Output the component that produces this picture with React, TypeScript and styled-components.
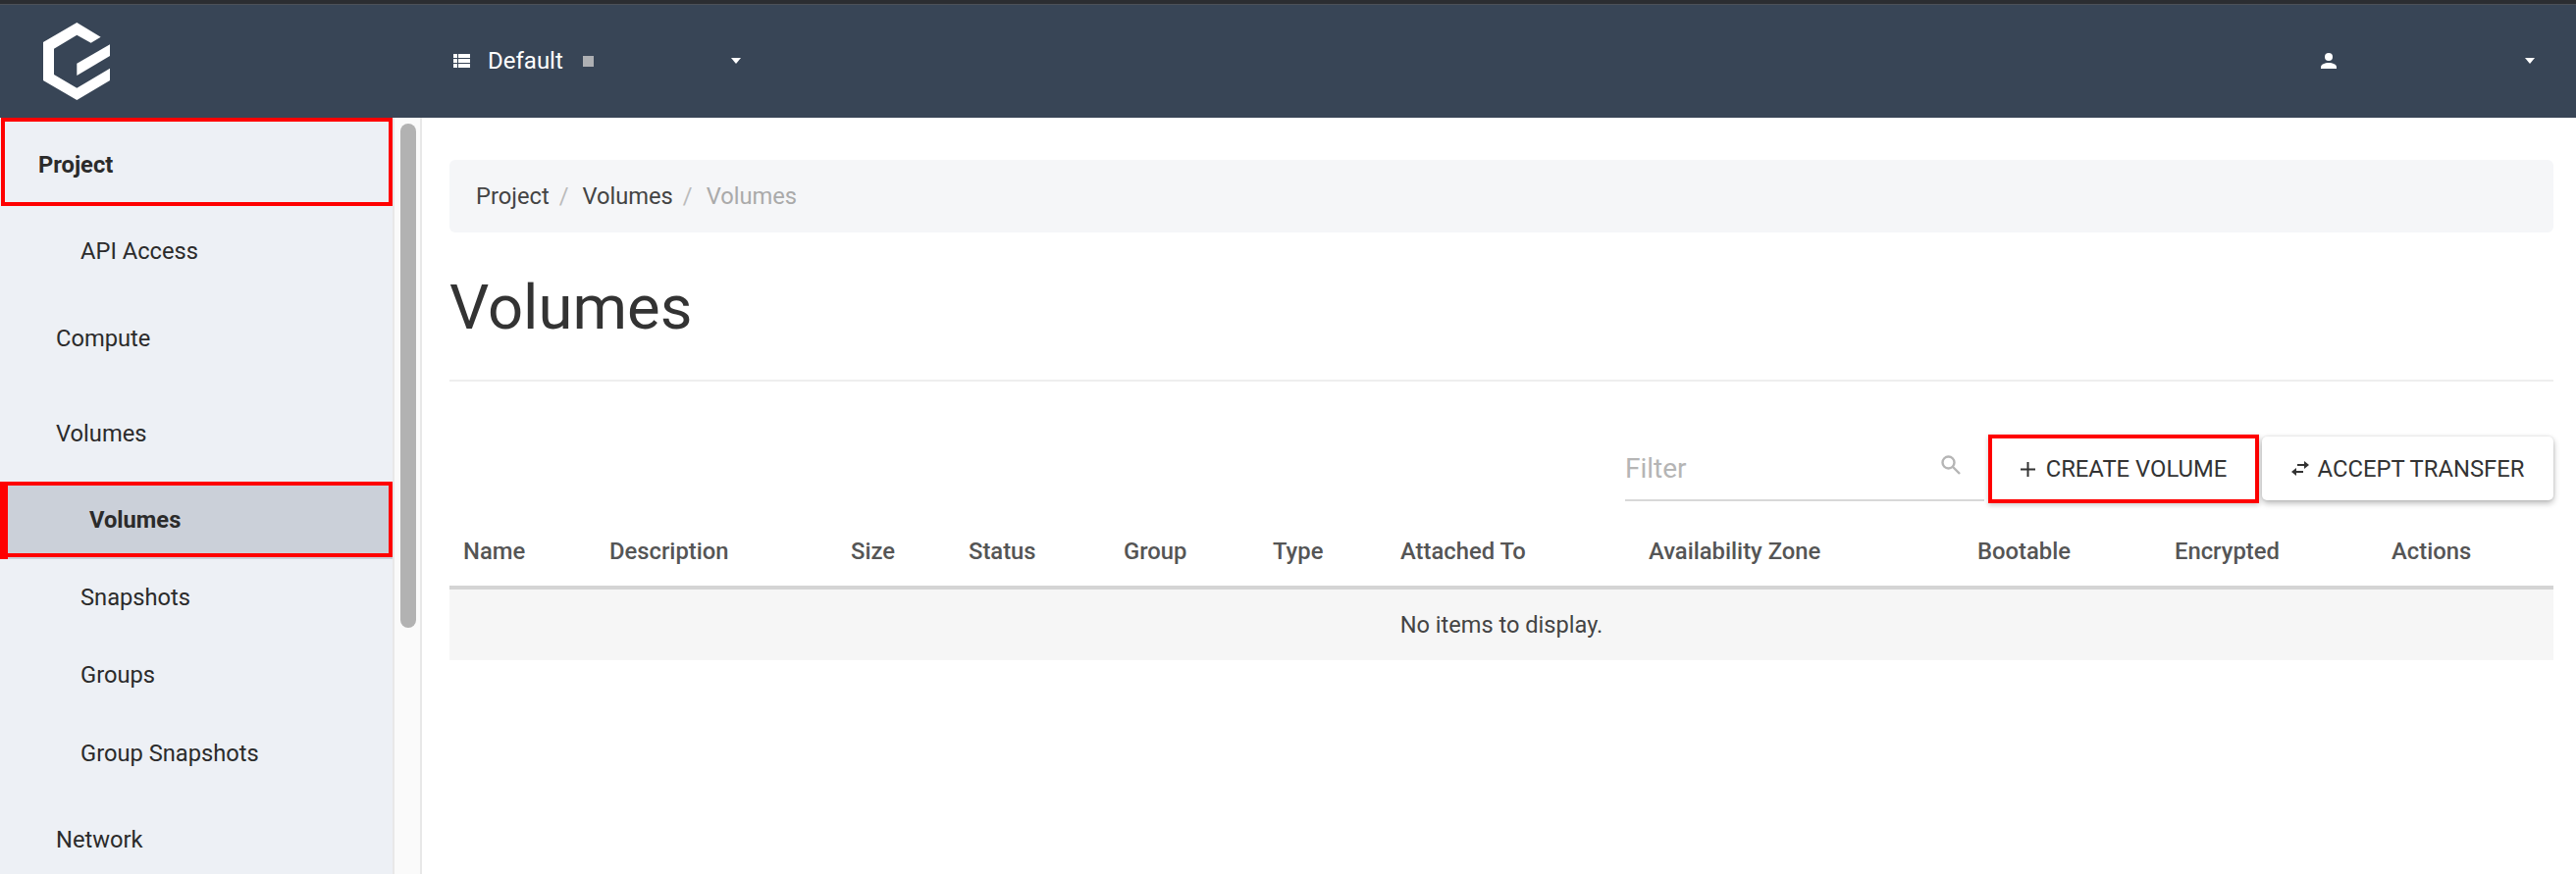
import React from 'react';
import styled, { createGlobalStyle } from 'styled-components';

const GlobalStyle = createGlobalStyle`
   html, body {
      margin: 0;
      padding: 0;
      height: 100%;
      overflow: hidden;
      background: #fff;
      font-family: Roboto, "Liberation Sans", sans-serif;
      font-size: 23.8px;
      color: #333;
   }
   * { box-sizing: border-box; }
`;

const Page = styled.div`
   width: 2625px;
   height: 891px;
   display: flex;
   flex-direction: column;
   overflow: hidden;
`;

const TopBar = styled.header`
   flex: 0 0 120px;
   display: flex;
   align-items: center;
   background: #384556;
   border-top: 4px solid #2b2d31;
   color: #fff;
   box-shadow: inset 0 1px 0 #4c5158;
`;

const Brand = styled.div`
   flex: 0 0 462px;
   padding-left: 44px;
   display: flex;
   align-items: center;
`;

const NavPicker = styled.div`
   display: flex;
   align-items: center;
   width: 293px;
   font-size: 24px;
`;

const PickerLabel = styled.span`
   margin-left: 18px;
`;

const Redacted = styled.span`
   width: 11px;
   height: 11px;
   margin-left: 20px;
   background: #aeb0b3;
`;

const Caret = styled.span`
   margin-left: auto;
   width: 0;
   height: 0;
   border-left: 5.5px solid transparent;
   border-right: 5.5px solid transparent;
   border-top: 6px solid #fff;
`;

const UserMenu = styled.div`
   margin-left: auto;
   margin-right: 42px;
   width: 218px;
   display: flex;
   align-items: center;
`;

const Body = styled.div`
   flex: 1;
   display: flex;
   min-height: 0;
`;

const Sidebar = styled.nav`
   flex: 0 0 400px;
   background: #edf0f5;
   display: flex;
   flex-direction: column;
`;

const ScrollTrack = styled.div`
   flex: 0 0 30px;
   position: relative;
   background: #fafafa;
   border-left: 2px solid #e8e8e8;
   border-right: 2px solid #e8e8e8;
`;

const ScrollThumb = styled.div`
   position: absolute;
   left: 6px;
   top: 6px;
   width: 16px;
   height: 514px;
   border-radius: 8px;
   background: #b2b2b2;
`;

const MenuItem = styled.a<{ $indent: number; $height: number; $shift?: number }>`
   flex: none;
   display: flex;
   align-items: center;
   height: ${p => p.$height}px;
   padding-left: ${p => p.$indent}px;
   padding-top: ${p => p.$shift ?? 0}px;
   color: #2b2b2b;
   font-size: 23.7px;
`;

const ProjectItem = styled(MenuItem)`
   font-weight: 700;
   margin-left: 1px;
   border: 4px solid #ff0000;
`;

const ActiveItem = styled(MenuItem)`
   position: relative;
   font-weight: 700;
   background: #cbd0d9;
   margin-left: 8px;
   margin-bottom: 2px;
   border: 4px solid #ff0000;
   border-left: 0;
   box-shadow: 0 2px 0 #cbd0d9;

   &::before {
      content: '';
      position: absolute;
      left: -8px;
      top: -4px;
      bottom: -6px;
      width: 8px;
      background: #ff0000;
   }
`;

const Main = styled.main`
   flex: 1;
   padding: 43px 23px 0 28px;
   min-width: 0;
`;

const Breadcrumb = styled.ol`
   margin: 0;
   height: 74px;
   display: flex;
   align-items: center;
   padding: 0 27px;
   list-style: none;
   background: #f5f6f8;
   border-radius: 6px;
   font-size: 23.7px;
`;

const Crumb = styled.li<{ $current?: boolean }>`
   color: ${p => (p.$current ? '#aaa' : '#444')};
   &:not(:first-child)::before {
      content: '/';
      color: #bbb;
      padding: 0 14px 0 10px;
   }
`;

const PageHeader = styled.div`
   height: 152px;
   padding-top: 42px;
   border-bottom: 2px solid #eeeeee;
`;

const Title = styled.h1`
   margin: 0;
   font-size: 63.4px;
   line-height: 68px;
   font-weight: 400;
   color: #333;
`;

const Actions = styled.div`
   display: flex;
   justify-content: flex-end;
   align-items: stretch;
   height: 70px;
   margin-top: 54px;
`;

const FilterBox = styled.label`
   width: 366px;
   height: 68px;
   margin-right: 4px;
   display: flex;
   align-items: center;
   border-bottom: 2px solid #d8d8d8;
`;

const FilterInput = styled.input`
   flex: 1;
   min-width: 0;
   border: 0;
   outline: 0;
   padding: 2px 0 0;
   font-family: inherit;
   font-size: 28px;
   background: transparent;
   color: #333;
   &::placeholder { color: #b5b5b5; opacity: 1; }
`;

const SearchIcon = styled.svg`
   width: 22px;
   height: 22px;
   margin-right: 23px;
   margin-top: -4px;
`;

const ActionButton = styled.button`
   display: flex;
   align-items: center;
   justify-content: center;
   gap: 9px;
   width: 297px;
   height: 65px;
   margin: 2px 0 0 3px;
   padding: 0;
   border: 0;
   border-radius: 5px;
   font-family: inherit;
   font-size: 23.8px;
   color: #333;
   background: #fff;
   cursor: pointer;
   box-shadow: 0 3px 6px rgba(0,0,0,.28), 0 0 3px rgba(0,0,0,.12);
`;

const CreateButton = styled(ActionButton)`
   gap: 11px;
   width: 276px;
   height: 70px;
   margin: 0;
   border: 4px solid #ff0000;
   border-radius: 0;
   box-shadow: 0 2px 5px rgba(0,0,0,.2);
`;

const Table = styled.table`
   width: 100%;
   table-layout: fixed;
   border-collapse: collapse;
   margin-top: 14px;
`;

const Col = styled.col<{ $w: number }>`
   width: ${p => p.$w}px;
`;

const Th = styled.th`
   height: 72px;
   padding: 0 0 0 14px;
   text-align: left;
   font-size: 23.8px;
   font-weight: 500;
   color: #555;
   white-space: nowrap;
   border-bottom: 4px solid #d4d4d4;
`;

const EmptyCell = styled.td`
   height: 74px;
   text-align: center;
   font-size: 23.6px;
   color: #444;
   background: #f6f6f6;
`;

const columns: [string, number][] = [
   ['Name', 149],
   ['Description', 246],
   ['Size', 120],
   ['Status', 158],
   ['Group', 152],
   ['Type', 130],
   ['Attached To', 253],
   ['Availability Zone', 335],
   ['Bootable', 201],
   ['Encrypted', 221],
   ['Actions', 179],
];

const Logo = () => (
   <svg width="68" height="79" viewBox="72 38 204 237" fill="#fff">
      <path d="M248 82 175 38 72 98V215L175 275 276 215V178L175 238 105 197V118L175 76 218 100Z" />
      <path d="M276 105V140L175 200V163Z" />
   </svg>
);

const ListIcon = () => (
   <svg width="17" height="14" viewBox="0 0 17 14" fill="#fff">
      <path d="M0 0h4v4H0zM5 0h12v4H5zM0 5h4v4H0zM5 5h12v4H5zM0 10h4v4H0zM5 10h12v4H5z" />
   </svg>
);

const UserIcon = () => (
   <svg width="16" height="16" viewBox="0 0 16 16" fill="#fff">
      <circle cx="8" cy="4" r="4" />
      <path d="M0 16v-1.6C0 11.6 4 10 8 10s8 1.6 8 4.4V16z" />
   </svg>
);

const PlusIcon = () => (
   <svg width="15" height="15" viewBox="0 0 15 15" fill="#333">
      <path d="M6.500 0h2v6.500H15v2H8.500V15h-2V8.500H0v-2h6.500z" />
   </svg>
);

const SwapIcon = () => (
   <svg width="18" height="15" viewBox="0 0 18 15" fill="#333">
      <path d="M5 15 0 11l5-4v3h7v2H5zM13 0l5 4-5 4V5H6V3h7z" />
   </svg>
);

export default function App() {
   return (
      <Page>
         <GlobalStyle />
         <TopBar>
            <Brand>
               <Logo />
            </Brand>
            <NavPicker>
               <ListIcon />
               <PickerLabel>Default</PickerLabel>
               <Redacted />
               <Caret />
            </NavPicker>
            <UserMenu>
               <UserIcon />
               <Caret />
            </UserMenu>
         </TopBar>
         <Body>
            <Sidebar>
               <ProjectItem $indent={34} $height={90} $shift={6}>Project</ProjectItem>
               <MenuItem $indent={82} $height={92}>API Access</MenuItem>
               <MenuItem $indent={57} $height={86}>Compute</MenuItem>
               <MenuItem $indent={57} $height={103} $shift={4}>Volumes</MenuItem>
               <ActiveItem $indent={83} $height={77}>Volumes</ActiveItem>
               <MenuItem $indent={82} $height={78}>Snapshots</MenuItem>
               <MenuItem $indent={82} $height={80}>Groups</MenuItem>
               <MenuItem $indent={82} $height={80}>Group Snapshots</MenuItem>
               <MenuItem $indent={57} $height={96}>Network</MenuItem>
            </Sidebar>
            <ScrollTrack>
               <ScrollThumb />
            </ScrollTrack>
            <Main>
               <Breadcrumb>
                  <Crumb>Project</Crumb>
                  <Crumb>Volumes</Crumb>
                  <Crumb $current>Volumes</Crumb>
               </Breadcrumb>
               <PageHeader>
                  <Title>Volumes</Title>
               </PageHeader>
               <Actions>
                  <FilterBox>
                     <FilterInput placeholder="Filter" />
                     <SearchIcon viewBox="0 0 22 22" fill="none" stroke="#b5b5b5" strokeWidth="2.4">
                        <circle cx="8.500" cy="8.500" r="6" />
                        <path d="M13 13l7 7" />
                     </SearchIcon>
                  </FilterBox>
                  <CreateButton><PlusIcon />CREATE VOLUME</CreateButton>
                  <ActionButton><SwapIcon />ACCEPT TRANSFER</ActionButton>
               </Actions>
               <Table>
                  <colgroup>
                     {columns.map(([name, w]) => <Col key={name} $w={w} />)}
                  </colgroup>
                  <thead>
                     <tr>
                        {columns.map(([name]) => <Th key={name}>{name}</Th>)}
                     </tr>
                  </thead>
                  <tbody>
                     <tr>
                        <EmptyCell colSpan={columns.length}>No items to display.</EmptyCell>
                     </tr>
                  </tbody>
               </Table>
            </Main>
         </Body>
      </Page>
   );
}
